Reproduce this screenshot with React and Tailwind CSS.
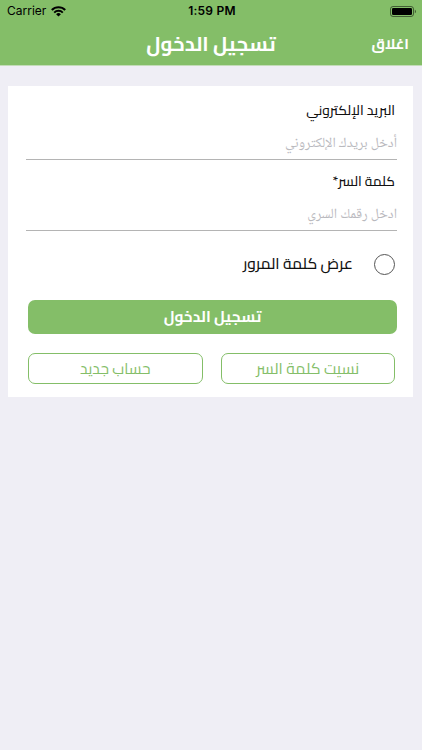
import React from 'react';

function StatusBar() {
  return (
    <div dir="ltr" className="flex h-[22px] items-center justify-between pl-[7px] pr-[6px] font-['Inter','Liberation_Sans',sans-serif] text-black">
      <div className="flex w-[120px] items-center gap-[5px]">
        <span className="text-[12px] leading-[22px]">Carrier</span>
        <svg width="15" height="11" viewBox="0 0 15 11" fill="none">
          <path d="M0.8 4.1a9.4 9.4 0 0 1 13.4 0" stroke="#000" strokeWidth="2.1" />
          <path d="M3.2 6.6a6.1 6.1 0 0 1 8.6 0" stroke="#000" strokeWidth="2" />
          <path d="M7.5 10.6 5.1 8.3a3.4 3.4 0 0 1 4.8 0z" fill="#000" />
        </svg>
      </div>
      <span className="pl-px text-[12px] font-semibold leading-[22px] tracking-[0.25px]">1:59 PM</span>
      <div className="flex w-[120px] justify-end">
        <svg width="26" height="11" viewBox="0 0 26 11" fill="none">
          <rect x="0.5" y="0.5" width="23" height="10" rx="2.5" stroke="#000" strokeOpacity="0.5" />
          <rect x="2" y="2" width="20" height="7" rx="1.2" fill="#000" />
          <path d="M24.8 3.7v3.6c.8-.3 1.2-1 1.2-1.8s-.4-1.5-1.200-1.8z" fill="#000" fillOpacity="0.5" />
        </svg>
      </div>
    </div>
  );
}

function Field({ label, type, placeholder }) {
  return (
    <label className="flex flex-col">
      <span className="h-6 pr-[2px] text-[13.7px] font-medium leading-6 text-[#111]">{label}</span>
      <input
        type={type}
        placeholder={placeholder}
        className="h-[38px] w-full border-b-[1.5px] border-[#b4b4b4] pt-[6px] font-['Noto_Naskh_Arabic','Noto_Sans',sans-serif] text-[14px] outline-none placeholder:text-[#b9b9be]"
      />
    </label>
  );
}

export default function App() {
  return (
    <div dir="rtl" className="flex min-h-screen flex-col bg-[#efeef5] font-['Cairo','Noto_Sans',sans-serif]">
      <header className="h-[66px] border-b border-[#c3dcb8] bg-[#84be68]">
        <StatusBar />
        <div className="grid h-[43px] grid-cols-[1fr_auto_1fr] items-center px-[13px] text-white">
          <button className="text-right text-[14.8px] font-bold leading-6">اغلاق</button>
          <h1 className="text-[20.3px] font-bold leading-8">تسجيل الدخول</h1>
        </div>
      </header>

      <main className="ml-[8px] mr-[9px] mt-5 flex h-[311px] flex-col bg-white pl-[18px] pr-4 pt-3">
        <Field label="البريد الإلكتروني" type="email" placeholder="أدخل بريدك الإلكتروني" />
        <div className="h-[9px]" />
        <Field label="كلمة السر*" type="password" placeholder="ادخل رقمك السري" />

        {/* Show password */}
        <label className="mt-[22px] flex h-[22px] items-center gap-[21px] pr-[2px]">
          <span className="size-[21px] rounded-full border border-[#555]" />
          <span className="text-[15.5px] font-medium leading-[22px] text-[#111]">عرض كلمة المرور</span>
        </label>

        <button className="ml-[2px] mt-[25px] h-[34px] shrink-0 rounded-[7px] bg-[#84be68] text-[15.3px] font-bold leading-[34px] text-white">
          تسجيل الدخول
        </button>

        <div className="ml-[2px] mr-[2px] mt-[19px] grid grid-cols-2 gap-[18px]">
          <button className="h-[31px] rounded-[7px] border border-[#84be68] text-[15.7px] leading-[29px] text-[#84be68]">نسيت كلمة السر</button>
          <button className="h-[31px] rounded-[7px] border border-[#84be68] text-[15.3px] leading-[29px] text-[#84be68]">حساب جديد</button>
        </div>
      </main>
    </div>
  );
}
